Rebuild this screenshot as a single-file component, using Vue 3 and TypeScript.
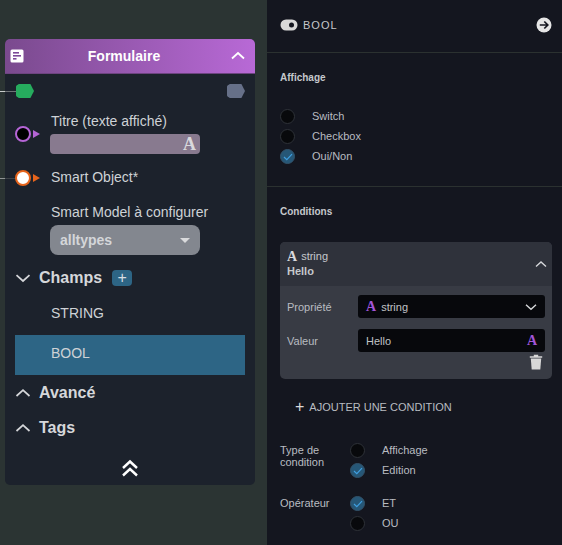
<template>
  <div class="page">
    <section class="canvas">
      <span class="wire wire-top"></span>
      <span class="wire wire-obj"></span>
      <div class="node">
        <header class="node-head">
          <svg class="form-icon" width="14" height="14" viewBox="0 0 14 14">
            <rect x="0.500" y="0.500" width="13" height="13" rx="1.500" fill="#fff" />
            <rect x="3" y="3" width="6" height="1.600" fill="#7c4a98" />
            <rect x="3" y="6" width="8" height="1.600" fill="#7c4a98" />
            <rect x="3" y="9" width="3.500" height="1.600" fill="#7c4a98" />
          </svg>
          <span class="node-title">Formulaire</span>
          <svg width="16" height="16" viewBox="0 0 16 16" class="head-chev">
            <path d="M2 10.500 8 5l6 5.500" fill="none" stroke="#fff" stroke-width="1.800" />
          </svg>
        </header>

        <div class="flow-row">
          <span class="pill pill-green"></span>
          <span class="pill pill-grey"></span>
        </div>

        <div class="field field-title">
          <span class="port port-purple"></span>
          <span class="arrow arrow-purple"></span>
          <label>Titre (texte affiché)</label>
          <div class="text-input"><span class="glyph-a">A</span></div>
        </div>

        <div class="field field-object">
          <span class="port port-orange"></span>
          <span class="arrow arrow-orange"></span>
          <label>Smart Object*</label>
        </div>

        <div class="field field-model">
          <label>Smart Model à configurer</label>
          <div class="select">
            <span>alltypes</span>
            <span class="caret"></span>
          </div>
        </div>

        <div class="section section-champs">
          <svg width="16" height="16" viewBox="0 0 16 16">
            <path d="M1.500 5.200 8 11l6.500-5.800" fill="none" stroke="#d5d7da" stroke-width="1.700" />
          </svg>
          <span>Champs</span>
          <button class="add-btn">+</button>
        </div>
        <div class="item">STRING</div>
        <div class="item item-active">BOOL</div>
        <div v-for="s in closedSections" :key="s" class="section section-closed">
          <svg width="16" height="16" viewBox="0 0 16 16">
            <path d="M1.500 11 8 5.200 14.500 11" fill="none" stroke="#d5d7da" stroke-width="1.700" />
          </svg>
          <span>{{ s }}</span>
        </div>
        <div class="collapse">
          <svg width="18" height="18" viewBox="0 0 18 18">
            <path d="M2 9 9 2.500 16 9M2 16.500 9 10l7 6.500" fill="none" stroke="#fff" stroke-width="2.400" />
          </svg>
        </div>
      </div>
    </section>

    <aside class="panel">
      <div class="panel-head">
        <svg width="18" height="12" viewBox="0 0 18 12">
          <rect x="0.500" y="0.500" width="17" height="11" rx="5.500" fill="#d9d9d9" />
          <circle cx="11.500" cy="6" r="2.500" fill="#14161f" />
        </svg>
        <span class="panel-name">BOOL</span>
        <svg class="go" width="16" height="16" viewBox="0 0 16 16">
          <circle cx="8" cy="8" r="7.500" fill="#e6e6e6" />
          <path d="M3.800 8h8M8.300 4.500 11.800 8l-3.500 3.500" fill="none" stroke="#14161f" stroke-width="1.700" />
        </svg>
      </div>

      <div class="block block-display">
        <h3>Affichage</h3>
        <div class="radios">
          <div v-for="o in displayOptions" :key="o.label" class="radio">
            <span class="dot" :class="{ on: o.on }">
              <svg v-if="o.on" width="10" height="8" viewBox="0 0 10 8"><path d="M1 4l2.800 2.600L9 1.200" fill="none" stroke="#3f9fe0" stroke-width="1.200" /></svg>
            </span>
            <span>{{ o.label }}</span>
          </div>
        </div>
      </div>

      <div class="block-cond">
        <h3>Conditions</h3>
        <div class="cond-card">
          <div class="cond-head">
            <div>
              <div class="cond-type"><span class="glyph-a small">A</span>string</div>
              <strong>Hello</strong>
            </div>
            <svg width="12" height="12" viewBox="0 0 12 12">
              <path d="M1 8.500 6 4l5 4.500" fill="none" stroke="#d5d7da" stroke-width="1.400" />
            </svg>
          </div>
          <div class="cond-body">
            <div class="cond-row">
              <span>Propriété</span>
              <div class="dark-input">
                <span class="glyph-a typed">A</span>
                <span class="grow">string</span>
                <svg width="12" height="12" viewBox="0 0 12 12">
                  <path d="M1 3.800 6 8.300l5-4.500" fill="none" stroke="#d5d7da" stroke-width="1.400" />
                </svg>
              </div>
            </div>
            <div class="cond-row">
              <span>Valeur</span>
              <div class="dark-input">
                <span class="grow">Hello</span>
                <span class="glyph-a typed">A</span>
              </div>
            </div>
            <div class="trash-row">
              <svg width="14" height="16" viewBox="0 0 14 16">
                <path d="M0.800 2.200h12.400v1.500H0.800zM4.800 2.200V.8h4.400v1.400z" fill="#d8d8d8" />
                <path d="M1.800 4.600h10.400L11.300 15.500H2.700z" fill="#d8d8d8" />
              </svg>
            </div>
          </div>
        </div>

        <div class="add-cond"><span class="plus">+</span>AJOUTER UNE CONDITION</div>

        <div class="opt-group type-group">
          <div class="opt-label">Type de condition</div>
          <div class="radios">
            <div v-for="o in typeOptions" :key="o.label" class="radio">
              <span class="dot" :class="{ on: o.on }">
                <svg v-if="o.on" width="10" height="8" viewBox="0 0 10 8"><path d="M1 4l2.800 2.600L9 1.200" fill="none" stroke="#3f9fe0" stroke-width="1.200" /></svg>
              </span>
              <span>{{ o.label }}</span>
            </div>
          </div>
        </div>

        <div class="opt-group">
          <div class="opt-label">Opérateur</div>
          <div class="radios">
            <div v-for="o in opOptions" :key="o.label" class="radio">
              <span class="dot" :class="{ on: o.on }">
                <svg v-if="o.on" width="10" height="8" viewBox="0 0 10 8"><path d="M1 4l2.800 2.600L9 1.200" fill="none" stroke="#3f9fe0" stroke-width="1.200" /></svg>
              </span>
              <span>{{ o.label }}</span>
            </div>
          </div>
        </div>
      </div>
    </aside>
  </div>
</template>

<script setup lang="ts">
interface Option {
  label: string
  on: boolean
}

const closedSections = ['Avancé', 'Tags']

const displayOptions: Option[] = [
  { label: 'Switch', on: false },
  { label: 'Checkbox', on: false },
  { label: 'Oui/Non', on: true },
]

const typeOptions: Option[] = [
  { label: 'Affichage', on: false },
  { label: 'Edition', on: true },
]

const opOptions: Option[] = [
  { label: 'ET', on: true },
  { label: 'OU', on: false },
]
</script>

<style>
html,
body {
  margin: 0;
  background: #14161f;
  overflow: hidden;
}
</style>

<style scoped>
.page {
  display: flex;
  width: 562px;
  height: 545px;
  font-family: "Liberation Sans", Arial, sans-serif;
  overflow: hidden;
}

.canvas {
  position: relative;
  width: 267px;
  flex: none;
  background: #2b3433;
}

.wire {
  position: absolute;
  left: 0;
  height: 1px;
  z-index: 2;
}

.wire-top {
  top: 91px;
  width: 16px;
  background: linear-gradient(90deg, #c9cccc 30%, #6f7376 34%, #6f7376);
}

.wire-obj {
  top: 178px;
  width: 16px;
  background: linear-gradient(90deg, #8f9394 30%, #3c4247 34%);
}

/* node sits on a free canvas */
.node {
  position: absolute;
  left: 5px;
  top: 39px;
  width: 250px;
  height: 446px;
  background: #1c222c;
  border-radius: 5px;
  color: #ced2d6;
  font-size: 14px;
}

.node-head {
  display: flex;
  align-items: center;
  height: 34px;
  padding: 0 9px 0 5px;
  background: linear-gradient(90deg, #7a4a8e, #b869d6);
  border-radius: 5px 5px 0 0;
  border-bottom: 1px solid #6d4480;
}

.form-icon {
  flex: none;
}

.node-title {
  flex: 1;
  text-align: center;
  padding-right: 6px;
  color: #fff;
  font-size: 14px;
  font-weight: 700;
}

.head-chev {
  flex: none;
}

.flow-row {
  display: flex;
  justify-content: space-between;
  padding: 10px 10px 0 11px;
}

.pill {
  width: 18px;
  height: 14px;
  border-radius: 3px;
  clip-path: polygon(0 12%, 15% 0, 80% 0, 100% 50%, 80% 100%, 15% 100%, 0 88%);
}

.pill-green {
  background: #26ac5e;
}

.pill-grey {
  background: #667088;
}

.field {
  position: relative;
  padding-left: 45px;
}

.field label {
  display: block;
  line-height: 18px;
  padding-left: 1px;
}

.field-title {
  margin-top: 14px;
}

.field-object {
  margin-top: 14px;
}

.field-model {
  margin-top: 17px;
}

.port {
  position: absolute;
  left: 10px;
  width: 16px;
  height: 16px;
  border-radius: 50%;
  box-sizing: border-box;
  z-index: 3;
}

.port-purple {
  top: 14px;
  background: #000;
  border: 2px solid #b565d6;
}

.port-orange {
  top: 2px;
  background: #fff;
  border: 2px solid #e6641c;
}

.arrow {
  position: absolute;
  left: 28px;
  width: 0;
  height: 0;
  border-style: solid;
  border-width: 4px 0 4px 7px;
  border-color: transparent;
}

.arrow-purple {
  top: 18px;
  border-left-color: #b565d6;
}

.arrow-orange {
  top: 6px;
  border-left-color: #e6641c;
}

.text-input {
  display: flex;
  align-items: center;
  justify-content: flex-end;
  width: 150px;
  height: 20px;
  margin-top: 4px;
  padding-right: 4px;
  box-sizing: border-box;
  background: #887a8f;
  border-radius: 4px;
}

.glyph-a {
  font-family: "Liberation Serif", "DejaVu Serif", serif;
  font-weight: 700;
  font-size: 18px;
  line-height: 1;
  color: #d9d9dc;
}

.select {
  display: flex;
  align-items: center;
  justify-content: space-between;
  width: 150px;
  height: 30px;
  margin-top: 4px;
  padding: 0 10px;
  box-sizing: border-box;
  background: #83878f;
  border-radius: 8px;
  color: #d4d6d9;
  font-weight: 700;
}

.caret {
  width: 0;
  height: 0;
  border-style: solid;
  border-width: 5px 5px 0;
  border-color: #d9dadc transparent transparent;
}

.section {
  display: flex;
  align-items: center;
  gap: 8px;
  padding-left: 10px;
  font-size: 16px;
  font-weight: 700;
  line-height: 20px;
  color: #d5d7da;
}

.section-champs {
  margin-top: 13px;
}

.section-closed {
  height: 20px;
  margin-top: 15px;
}

.section-champs + .item {
  margin-top: 17px;
}

.item {
  display: flex;
  align-items: center;
  height: 16px;
  padding-left: 46px;
}

.item-active {
  height: 40px;
  margin: 14px 10px 8px;
  padding: 0 0 4px 36px;
  box-sizing: border-box;
  background: #2d6585;
}

.item-active + .section-closed {
  margin-top: 0;
}

.add-btn {
  width: 20px;
  height: 16px;
  margin-left: 2px;
  padding: 0;
  border: 0;
  border-radius: 4px;
  background: #2d6585;
  color: #d7dde2;
  font: 400 16px/16px "Liberation Sans", sans-serif;
}

.collapse {
  display: flex;
  justify-content: center;
  margin-top: 21px;
}

.panel {
  flex: 1;
  min-width: 0;
  background: #14161f;
  color: #b9bcc1;
  font-size: 11px;
}

.panel-head {
  display: flex;
  align-items: center;
  gap: 5px;
  height: 53px;
  padding: 0 10px 2px 13px;
  box-sizing: border-box;
  border-bottom: 1px solid #2b3130;
}

.panel-name {
  flex: 1;
  letter-spacing: 1px;
  color: #c5c7cb;
  font-size: 11px;
}

h3 {
  margin: 0;
  font-size: 10px;
  font-weight: 700;
  line-height: 14px;
  color: #c5c8cc;
}

.block-display {
  height: 134px;
  box-sizing: border-box;
  padding: 18px 0 0 13px;
  border-bottom: 1px solid #2b3130;
}

.block-display .radios {
  margin-top: 24px;
}

.radios {
  display: flex;
  flex-direction: column;
  gap: 5px;
}

.radio {
  display: flex;
  align-items: center;
  gap: 17px;
  height: 15px;
  line-height: 15px;
}

.dot {
  display: flex;
  align-items: center;
  justify-content: center;
  width: 15px;
  height: 15px;
  box-sizing: border-box;
  border-radius: 50%;
  background: #08090c;
  border: 1px solid #2e3238;
}

.dot.on {
  background: #265777;
  border-color: #33536b;
}

.block-cond {
  padding: 18px 10px 0 13px;
}

.cond-card {
  margin-top: 23px;
  border-radius: 5px;
  overflow: hidden;
  background: #383b44;
}

.cond-head {
  display: flex;
  align-items: center;
  justify-content: space-between;
  height: 44px;
  padding: 0 5px 0 7px;
  background: #2f323b;
  color: #c5c8cc;
  line-height: 15px;
}

.cond-type {
  display: flex;
  align-items: center;
  gap: 4px;
}

.glyph-a.small {
  font-size: 14px;
}

.cond-body {
  padding: 9px 7px 0 7px;
  height: 93px;
  box-sizing: border-box;
}

.cond-row {
  display: flex;
  align-items: center;
  height: 23px;
  margin-bottom: 11px;
}

.cond-row > span {
  width: 71px;
  flex: none;
}

.dark-input {
  flex: 1;
  display: flex;
  align-items: center;
  gap: 5px;
  height: 23px;
  padding: 0 8px;
  box-sizing: border-box;
  background: #07080c;
  border-radius: 3px;
  color: #c0c3c7;
}

.grow {
  flex: 1;
}

.glyph-a.typed {
  font-size: 14px;
  color: #a255d8;
}

.trash-row {
  display: flex;
  justify-content: flex-end;
  margin-top: -9px;
  padding-right: 2px;
}

.add-cond {
  display: flex;
  align-items: center;
  gap: 5px;
  margin-top: 20px;
  padding-left: 15px;
  height: 16px;
  color: #b9bcc1;
}

.plus {
  font-size: 16px;
  line-height: 16px;
  color: #d9d9d9;
}

.opt-group {
  display: flex;
  margin-top: 18px;
}

.type-group {
  margin-top: 28px;
}

.opt-label {
  width: 70px;
  flex: none;
  line-height: 12px;
  padding-top: 1px;
}
</style>
